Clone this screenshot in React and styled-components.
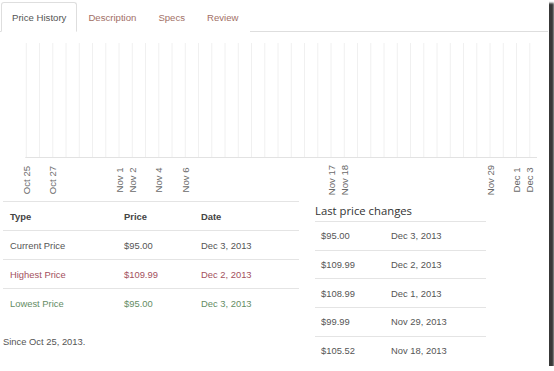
import styled, { createGlobalStyle } from "styled-components";

const GlobalStyle = createGlobalStyle`
  body {
    margin: 0;
    background: #fff;
    font-family: "Liberation Sans", Arial, sans-serif;
  }
`;

const tabs = ["Price History", "Description", "Specs", "Review"];

const summary = [
  { type: "Current Price", price: "$95.00", date: "Dec 3, 2013", tone: "plain" },
  { type: "Highest Price", price: "$109.99", date: "Dec 2, 2013", tone: "high" },
  { type: "Lowest Price", price: "$95.00", date: "Dec 3, 2013", tone: "low" },
];

const changes = [
  ["$95.00", "Dec 3, 2013"],
  ["$109.99", "Dec 2, 2013"],
  ["$108.99", "Dec 1, 2013"],
  ["$99.99", "Nov 29, 2013"],
  ["$105.52", "Nov 18, 2013"],
];

const ticks = [
  [0, "Oct 25"],
  [2, "Oct 27"],
  [7, "Nov 1"],
  [8, "Nov 2"],
  [10, "Nov 4"],
  [12, "Nov 6"],
  [23, "Nov 17"],
  [24, "Nov 18"],
  [35, "Nov 29"],
  [37, "Dec 1"],
  [38, "Dec 3"],
];

const X0 = 26.3;
const STEP = 13.25;

function Chart() {
  const lines = Array.from({ length: 39 }, (_, i) => X0 + i * STEP);
  return (
    <svg width="549" height="168" viewBox="0 0 549 168">
      {lines.map((x, i) => (
        <line key={i} x1={x} x2={x} y1="11" y2="125" stroke="#f0f0f0" strokeWidth="1" />
      ))}
      <line x1={X0 - 1} x2="537" y1="125.5" y2="125.5" stroke="#e2e2e2" strokeWidth="1" />
      {ticks.map(([i, label]) => {
        const x = X0 + i * STEP;
        return (
          <text
            key={label}
            x={x}
            y="148"
            transform={`rotate(-90 ${x} 148)`}
            textAnchor="middle"
            dominantBaseline="central"
            fontSize="9.6"
            fill="#6a6a6a"
            fontFamily="Liberation Sans, Arial, sans-serif"
          >
            {label}
          </text>
        );
      })}
    </svg>
  );
}

function App() {
  return (
    <>
      <GlobalStyle />
      <Frame>
        <TabBar>
          {tabs.map((t, i) => (
            <Tab key={t} $active={i === 0}>
              {t}
            </Tab>
          ))}
        </TabBar>

        <ChartBox>
          <Chart />
        </ChartBox>

        <Bottom>
          <LeftCol>
            <Table>
              <thead>
                <tr>
                  <Th>Type</Th>
                  <Th>Price</Th>
                  <Th>Date</Th>
                </tr>
              </thead>
              <tbody>
                {summary.map((r) => (
                  <tr key={r.type}>
                    <Td $tone={r.tone}>{r.type}</Td>
                    <Td $tone={r.tone}>{r.price}</Td>
                    <Td $tone={r.tone}>{r.date}</Td>
                  </tr>
                ))}
              </tbody>
            </Table>
            <Since>Since Oct 25, 2013.</Since>
          </LeftCol>

          <RightCol>
            <Heading>Last price changes</Heading>
            <ChangeTable>
              <tbody>
                {changes.map(([p, d]) => (
                  <tr key={p + d}>
                    <ChangeTd>{p}</ChangeTd>
                    <ChangeTd>{d}</ChangeTd>
                  </tr>
                ))}
              </tbody>
            </ChangeTable>
          </RightCol>
        </Bottom>
      </Frame>
    </>
  );
}

const Frame = styled.div`
  width: 549px;
  height: 366px;
  background: #fff;
  box-shadow: 4px 4px 2px 1px #383838;
  overflow: hidden;
  position: relative;
`;

const TabBar = styled.div`
  display: flex;
  align-items: flex-end;
  height: 32px;
  box-sizing: border-box;
  padding: 2px 0 0 1px;
  margin-right: 1px;
  border-bottom: 1px solid #dedede;
`;

const Tab = styled.div`
  height: 30px;
  box-sizing: border-box;
  margin-bottom: -1px;
  padding: 0 10px;
  display: flex;
  align-items: center;
  font-size: 9.6px;
  color: ${(p) => (p.$active ? "#555" : "#a26f66")};
  background: #fff;
  border: 1px solid ${(p) => (p.$active ? "#dedede" : "transparent")};
  border-bottom-color: ${(p) => (p.$active ? "#fff" : "transparent")};
  border-radius: 3px 3px 0 0;
`;

const ChartBox = styled.div`
  height: 168px;
  svg {
    display: block;
  }
`;

const Bottom = styled.div`
  display: flex;
  align-items: flex-start;
  padding-left: 3px;
`;

const LeftCol = styled.div`
  width: 296px;
  margin-top: 1px;
`;

const Table = styled.table`
  width: 100%;
  border-collapse: collapse;
  font-size: 9.4px;
`;

const Th = styled.th`
  text-align: left;
  font-weight: bold;
  color: #444;
  height: 28px;
  padding: 0 0 0 7px;
  border-top: 1px solid #e4e4e4;
  border-bottom: 1px solid #e4e4e4;
  &:nth-child(1) {
    width: 107px;
  }
  &:nth-child(2) {
    width: 70px;
  }
`;

const toneColor = {
  plain: "#555",
  high: "#a3505d",
  low: "#648c64",
};

const Td = styled.td`
  height: 28px;
  padding: 0 0 0 7px;
  color: ${(p) => toneColor[p.$tone]};
  tr:not(:last-child) > & {
    border-bottom: 1px solid #e4e4e4;
  }
`;

const Since = styled.div`
  margin-top: 19px;
  font-size: 9.4px;
  color: #555;
`;

const RightCol = styled.div`
  margin-left: 16px;
  width: 171px;
  margin-top: 2px;
`;

const Heading = styled.div`
  font-family: "Open Sans", sans-serif;
  font-size: 11.3px;
  color: #333;
  height: 19px;
  line-height: 18px;
  border-bottom: 1px solid #e4e4e4;
`;

const ChangeTable = styled.table`
  width: 100%;
  border-collapse: collapse;
  font-size: 9.4px;
  color: #555;
`;

const ChangeTd = styled.td`
  height: 27.7px;
  padding: 0 0 0 6px;
  &:first-child {
    width: 64px;
  }
  tr:not(:last-child) > & {
    border-bottom: 1px solid #e4e4e4;
  }
`;

export default App;
